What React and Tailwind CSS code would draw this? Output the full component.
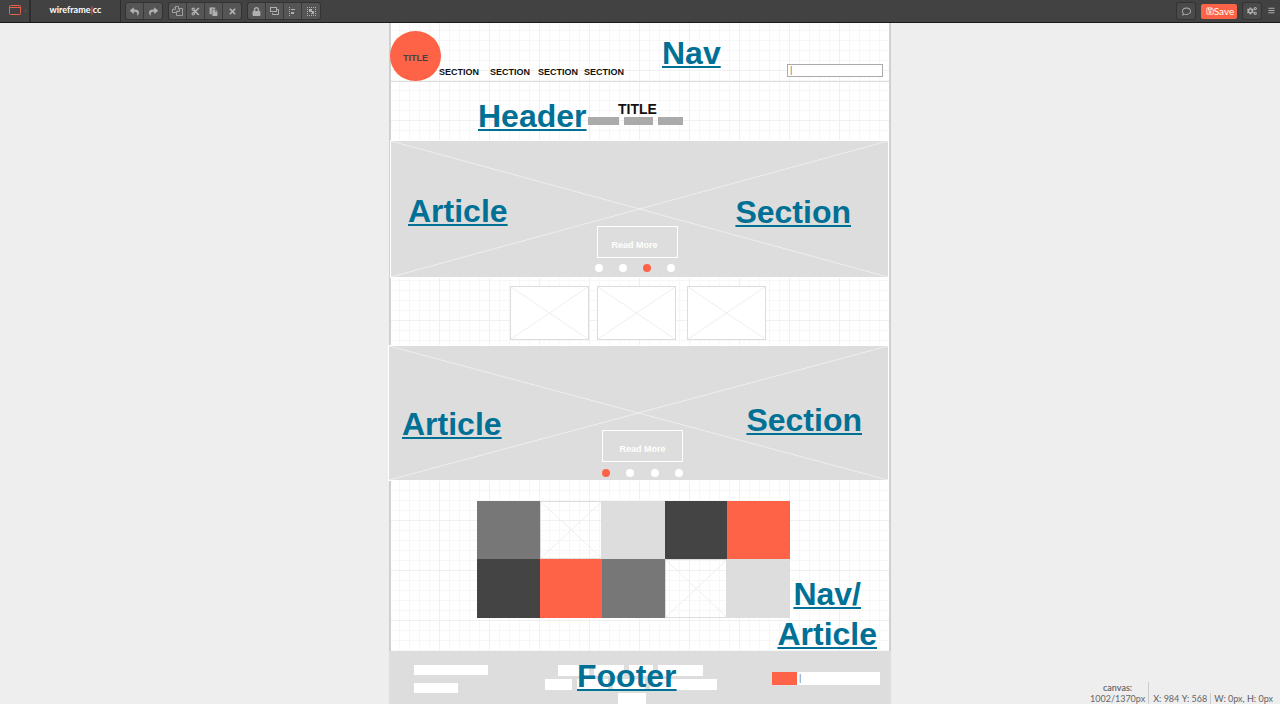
import React from 'react';
import {
  FaReply, FaShare, FaCut, FaPaste, FaTimes, FaLock,
  FaRegComment, FaRegSave, FaCogs, FaBars,
} from 'react-icons/fa';

function CopyIcon() {
  return (
    <svg width="11" height="10" viewBox="0 0 11 10" fill="#555" stroke="currentColor" strokeWidth=".8" aria-hidden="true">
      <path d="M3.5.5h3v6h-6v-3z" />
      <path d="M3.5.5v3h-3" />
      <path d="M7.5 2.5h3v7h-6v-4z" />
      <path d="M7.5 2.5v3h-3" />
    </svg>
  );
}

function ArrangeIcon() {
  return (
    <svg width="9" height="8" viewBox="0 0 9 8" fill="none" stroke="currentColor" aria-hidden="true">
      <rect x=".5" y=".5" width="6" height="4" />
      <path d="M8.5 2.5v5h-6M7 2.5h1.5M2.5 6v1.5" />
    </svg>
  );
}

function AlignIcon() {
  return (
    <svg width="9" height="9" viewBox="0 0 9 9" fill="currentColor" aria-hidden="true">
      <path d="M1 0h1v1H1zM1 2h1v1H1zM1 4h1v1H1zM1 6h1v1H1zM1 8h1v1H1zM3 2h4v1H3zM3 5h3v2H3z" />
    </svg>
  );
}

function SelectIcon() {
  return (
    <svg width="9" height="9" viewBox="0 0 9 9" fill="currentColor" aria-hidden="true">
      <path d="M0 0h1v1H0zM2 0h1v1H2zM4 0h1v1H4zM6 0h1v1H6zM8 0h1v1H8zM0 2h1v1H0zM0 4h1v1H0zM0 6h1v1H0zM0 8h1v1H0zM8 2h1v1H8zM8 4h1v1H8zM8 6h1v1H8zM8 8h1v1H8zM2 8h1v1H2zM4 8h1v1H4zM6 8h1v1H6zM2 2h3v3H2zM5 4h2v3H4V6h1z" />
    </svg>
  );
}

const groups = [
  [['Undo', FaReply], ['Redo', FaShare]],
  [['Copy', CopyIcon], ['Cut', FaCut], ['Paste', FaPaste], ['Delete', FaTimes]],
  [['Lock', FaLock], ['Arrange', ArrangeIcon], ['Align', AlignIcon], ['Group', SelectIcon]],
];

function ToolGroup({ items }) {
  return (
    <div className="flex h-4 divide-x divide-[#3a3a3a] rounded-xs bg-[#555] text-[#b0b0b0] shadow-[0_0_0_1px_#333]">
      {items.map(([label, Icon]) => (
        <button key={label} type="button" aria-label={label} className="flex w-[18px] items-center justify-center">
          <Icon size={9} />
        </button>
      ))}
    </div>
  );
}

function TopBar() {
  return (
    <header className="flex h-[23px] items-center justify-between border-b border-[#1a1a1a] bg-[#424242]">
      <div className="flex h-full items-center">
        <button type="button" aria-label="Device" className="flex h-full w-[31px] items-center border-r-2 border-[#2d2d2d] pb-[3px] pl-[9px] text-[#e8604a]">
          <svg width="19" height="10" viewBox="0 0 19 10" fill="none" stroke="currentColor" aria-hidden="true">
            <rect x=".5" y=".5" width="11" height="9" rx="1" />
            <path d="M.5 2.5h11" />
            <path d="M16 3.5v4l2-2z" fill="#7a4a42" stroke="none" />
          </svg>
        </button>
        <a href="#home" className="flex h-full w-[90px] items-center justify-center border-r border-[#2d2d2d] pb-[2px] font-[Lato,sans-serif] text-[9px] font-bold text-white">
          wireframe<span className="font-normal text-[#ff6347]">|</span>cc
        </a>
        <div className="flex gap-[7px] pl-[5px]">
          {groups.map((items) => <ToolGroup key={items[0][0]} items={items} />)}
        </div>
      </div>
      <div className="flex items-center gap-[6px] pr-[5px] font-[Lato,sans-serif] text-[#b0b0b0]">
        <button type="button" aria-label="Comments" className="flex h-4 w-[18px] items-center justify-center rounded-xs bg-[#4a4a4a] shadow-[0_0_0_1px_#333]">
          <FaRegComment size={9} />
        </button>
        <button type="button" className="flex h-[15px] w-9 items-center justify-center rounded-xs bg-[#ff6347] pl-[2px] text-[10px] text-white">
          <FaRegSave size={8} />Save
        </button>
        <button type="button" aria-label="Settings" className="mr-[1px] flex h-4 w-[18px] items-center justify-center rounded-xs bg-[#4a4a4a] shadow-[0_0_0_1px_#333]">
          <FaCogs size={10} />
        </button>
        <button type="button" aria-label="Menu" className="pb-[2px]"><FaBars size={7} /></button>
      </div>
    </header>
  );
}

function Note({ className, children }) {
  return (
    <a
      href="#note"
      className={`absolute z-10 text-center text-[32px] leading-[40px] font-bold whitespace-nowrap text-[#007095] underline decoration-2 underline-offset-[2px] ${className}`}
    >
      {children}
    </a>
  );
}

function Cross({ className }) {
  return (
    <svg className={`absolute inset-0 size-full ${className}`} viewBox="0 0 100 100" preserveAspectRatio="none" fill="none" stroke="currentColor" aria-hidden="true">
      <path d="M0 0L100 100M100 0L0 100" vectorEffect="non-scaling-stroke" />
    </svg>
  );
}

function Hero({ className, actionClass, dotsClass, active, children }) {
  return (
    <section className={`relative flex flex-col border border-white bg-[#ddd] ${className}`}>
      <Cross className="text-[#eee]" />
      <button type="button" className={`relative h-8 w-[81px] border border-white pt-[7px] text-[9px] font-bold text-white ${actionClass}`}>
        Read More
      </button>
      <div className={`relative flex justify-between ${dotsClass}`}>
        {[0, 1, 2, 3].map((i) => (
          <button key={i} type="button" aria-label={`Slide ${i + 1}`} className={`size-2 rounded-full ${i === active ? 'bg-[#ff6347]' : 'bg-white'}`} />
        ))}
      </div>
      {children}
    </section>
  );
}

const tiles = [
  'bg-[#777]', null, 'bg-[#ddd]', 'bg-[#444]', 'bg-[#ff6347]',
  'bg-[#444]', 'bg-[#ff6347]', 'bg-[#777]', null, 'bg-[#ddd]',
];

export default function App() {
  return (
    <div className="relative flex min-h-screen flex-col bg-[#eee] font-['Liberation_Sans',Arial,sans-serif]">
      <TopBar />
      <main className="mx-auto flex w-full max-w-[502px] grow flex-col border-x-2 border-[#d0d0d0] bg-white bg-[linear-gradient(to_right,#f0f0f0_1px,transparent_1px),linear-gradient(#f0f0f0_1px,transparent_1px),linear-gradient(to_right,#f7f7f7_1px,transparent_1px),linear-gradient(#f7f7f7_1px,transparent_1px)] bg-size-[50px_50px,50px_50px,10px_10px,10px_10px] bg-position-[48px_47px,48px_47px,8px_7px,8px_7px] bg-origin-padding">
        <nav className="relative flex h-[59px] items-end border-b border-[#ddd] text-[9px] font-bold text-[#111]">
          <a href="#title" className="-ml-px flex h-[50px] w-[51px] items-center justify-center rounded-full bg-[#ff6347] pt-[5px] text-[#444]">TITLE</a>
          <div className="-ml-[2px] flex pb-[3px] leading-[11px]">
            <a href="#s1" className="w-[51px]">SECTION</a>
            <a href="#s2" className="w-12">SECTION</a>
            <a href="#s3" className="w-[46px]">SECTION</a>
            <a href="#s4">SECTION</a>
          </div>
          <input type="text" aria-label="Search" defaultValue="|" className="mr-[6px] mb-1 ml-auto h-[13px] w-24 border border-[#aaa] bg-white px-[2px] text-[9px] font-normal text-[#777]" />
          <Note className="top-[10px] left-[271px]">Nav</Note>
        </nav>

        <header className="relative flex h-[58px] flex-col items-center pt-5 pr-[7px]">
          <h1 className="pl-[2px] text-[14px] leading-[15px] font-bold text-[#111]">TITLE</h1>
          <div className="flex h-2 gap-[5px] pr-[2px]">
            <span className="w-[31px] bg-[#aaa]" />
            <span className="w-[29px] bg-[#aaa]" />
            <span className="w-[25px] bg-[#aaa]" />
          </div>
          <Note className="top-[14px] left-[87px]">Header</Note>
        </header>

        <Hero className="-ml-px h-[138px] pt-[85px]" actionClass="ml-[206px] pr-[6px]" dotsClass="mt-[6px] ml-[204px] w-20" active={2}>
          <Note className="top-[50px] left-[17px]">Article</Note>
          <Note className="top-[51px] right-[37px]">Section</Note>
        </Hero>

        <section className="flex h-[67px] items-start pt-2 pl-[119px]">
          {['mr-2', 'mr-[11px]', ''].map((gap, i) => (
            <div key={i} className={`relative h-[54px] w-[79px] border border-[#ddd] bg-white ${gap}`}>
              <Cross className="text-[#eee]" />
            </div>
          ))}
        </section>

        <Hero className="-ml-[3px] h-[136px] pt-[84px]" actionClass="ml-[213px]" dotsClass="mt-[7px] ml-[213px] w-[81px]" active={0}>
          <Note className="top-[58px] left-[13px]">Article</Note>
          <Note className="top-[54px] right-[26px]">Section</Note>
        </Hero>

        <section className="relative pt-5 pb-[33px] pl-[86px]">
          <div className="grid h-[117px] w-[313px] grid-cols-5 grid-rows-[58px_59px]">
            {tiles.map((color, i) => (
              <div key={i} className={`relative ${color ?? 'border border-[#ddd]'}`}>
                {!color && <Cross className="text-[#eee]" />}
              </div>
            ))}
          </div>
          <Note className="top-[93px] right-[12px]">Nav/<br />Article</Note>
        </section>

        <footer className="relative -mx-[2px] flex grow items-start bg-[#ddd] pl-[25px]">
          <div className="flex w-[131px] flex-col gap-2 pt-[14px]">
            <span className="h-[10px] w-[74px] bg-white" />
            <span className="h-[10px] w-11 bg-white" />
          </div>
          <div className="flex w-[172px] flex-col items-center gap-[3px] pt-[14px]">
            <div className="flex h-[11px] gap-[5px] pr-[2px]">
              <span className="w-[31px] bg-white" />
              <span className="w-[30px] bg-white" />
              <span className="w-6 bg-white" />
              <span className="w-[45px] bg-white" />
            </div>
            <div className="flex h-[11px] gap-[5px]">
              <span className="w-[27px] bg-white" />
              <span className="w-[31px] bg-white" />
              <span className="w-8 bg-white" />
              <span className="w-[67px] bg-white" />
            </div>
            <span className="ml-[2px] h-[11px] w-7 bg-white" />
          </div>
          <form className="mt-[21px] mr-[11px] ml-auto flex h-[13px]">
            <button type="button" aria-label="Subscribe" className="w-[25px] bg-[#ff6347]" />
            <input type="text" aria-label="Email" defaultValue="|" className="w-[83px] bg-white px-[2px] text-[9px] text-[#777]" />
          </form>
          <Note className="top-[5px] left-[188px]">Footer</Note>
        </footer>
      </main>

      <div className="absolute right-[7px] bottom-0 flex items-end font-[Lato,sans-serif] text-[9px] leading-[11px] whitespace-nowrap text-[#666]">
        <div className="mr-1 border-r border-[#ccc] pr-[3px] text-center"><b className="font-semibold">canvas:</b><br />1002/1370px</div>
        <div className="mr-[3px] border-r border-[#ccc] pr-[3px]"><b className="font-medium">X:</b> 984 <b className="font-medium">Y:</b> 568</div>
        <div><b className="font-medium">W:</b> 0px, <b className="font-medium">H:</b> 0px</div>
      </div>
    </div>
  );
}
